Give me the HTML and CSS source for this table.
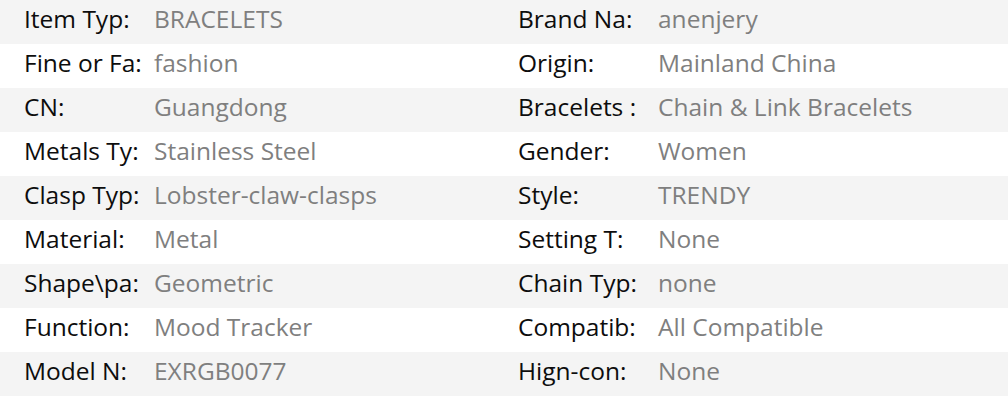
FILE: index.html
```html
<!DOCTYPE html>
<html>
<head>
<meta charset="utf-8">
<link rel="stylesheet" href="styles.css">
</head>
<body>
<div class="specs">
  <div class="row">
    <div class="cell left"><span class="label">Item Typ:</span><span class="value">BRACELETS</span></div>
    <div class="cell right"><span class="label">Brand Na:</span><span class="value">anenjery</span></div>
  </div>
  <div class="row">
    <div class="cell left"><span class="label">Fine or Fa:</span><span class="value">fashion</span></div>
    <div class="cell right"><span class="label">Origin:</span><span class="value">Mainland China</span></div>
  </div>
  <div class="row">
    <div class="cell left"><span class="label">CN:</span><span class="value">Guangdong</span></div>
    <div class="cell right"><span class="label">Bracelets :</span><span class="value">Chain &amp; Link Bracelets</span></div>
  </div>
  <div class="row">
    <div class="cell left"><span class="label">Metals Ty:</span><span class="value">Stainless Steel</span></div>
    <div class="cell right"><span class="label">Gender:</span><span class="value">Women</span></div>
  </div>
  <div class="row">
    <div class="cell left"><span class="label">Clasp Typ:</span><span class="value">Lobster-claw-clasps</span></div>
    <div class="cell right"><span class="label">Style:</span><span class="value">TRENDY</span></div>
  </div>
  <div class="row">
    <div class="cell left"><span class="label">Material:</span><span class="value">Metal</span></div>
    <div class="cell right"><span class="label">Setting T:</span><span class="value">None</span></div>
  </div>
  <div class="row">
    <div class="cell left"><span class="label">Shape\pa:</span><span class="value">Geometric</span></div>
    <div class="cell right"><span class="label">Chain Typ:</span><span class="value">none</span></div>
  </div>
  <div class="row">
    <div class="cell left"><span class="label">Function:</span><span class="value">Mood Tracker</span></div>
    <div class="cell right"><span class="label">Compatib:</span><span class="value">All Compatible</span></div>
  </div>
  <div class="row">
    <div class="cell left"><span class="label">Model N:</span><span class="value">EXRGB0077</span></div>
    <div class="cell right"><span class="label">Hign-con:</span><span class="value">None</span></div>
  </div>
</div>
</body>
</html>
```
FILE: styles.css
```css
html, body {
  margin: 0;
  padding: 0;
  background: #ffffff;
}
.specs {
  width: 1008px;
  font-family: "Open Sans", "Noto Sans", sans-serif;
  font-size: 24.5px;
}
.row {
  display: grid;
  grid-template-columns: 504px 504px;
  height: 44px;
  align-items: center;
}
.row:nth-child(odd) {
  background: #f4f4f4;
}
.cell {
  display: flex;
  align-items: baseline;
  white-space: nowrap;
  padding-bottom: 7px;
}
.cell.left {
  padding-left: 24px;
}
.cell.left .label {
  width: 130px;
}
.cell.right {
  padding-left: 14px;
}
.cell.right .label {
  width: 140px;
}
.label {
  color: #0d0d0d;
}
.value {
  color: #7f7f7f;
}
```
